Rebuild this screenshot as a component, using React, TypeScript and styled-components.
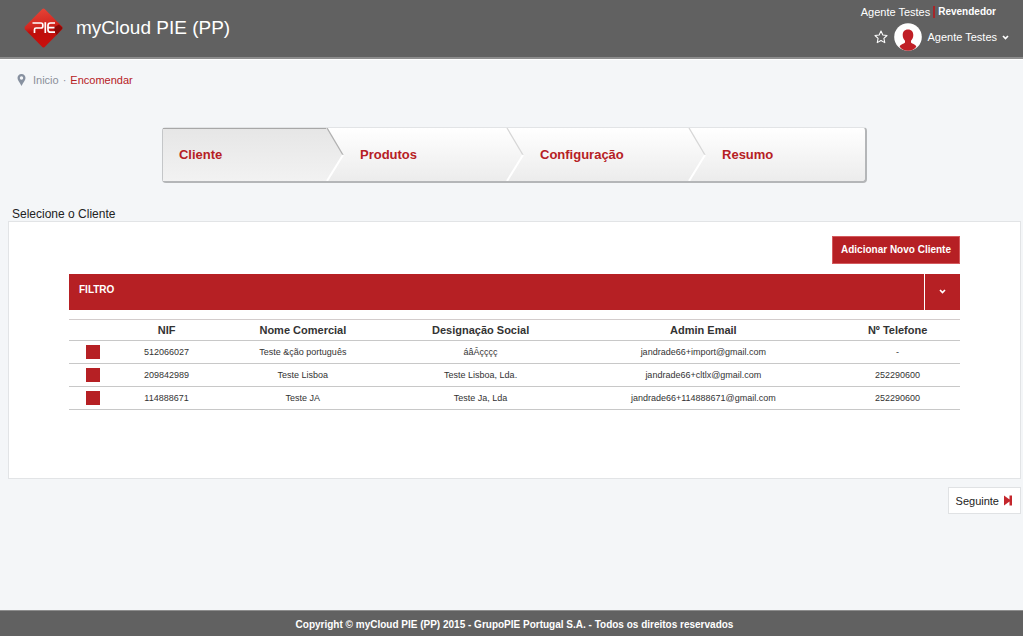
import React, { useState } from "react";
import styled, { createGlobalStyle } from "styled-components";

const red = "#b62024";

const GlobalStyle = createGlobalStyle`
  *, *::before, *::after { box-sizing: border-box; }
  body {
    margin: 0;
    background: #f4f6f8;
    color: #333;
    font: 11px/16px "Liberation Sans", Arial, sans-serif;
  }
  button { font: inherit; cursor: pointer; }
  a { color: inherit; text-decoration: none; }
`;

const Page = styled.div`
  display: flex;
  flex-direction: column;
  min-height: 100vh;
`;

const Header = styled.header`
  display: flex;
  align-items: flex-start;
  justify-content: space-between;
  height: 60px;
  padding: 4px 14px 0 24px;
  background: #616161;
  border-bottom: 1px solid #fff;
  box-shadow: inset 0 -2px 0 #8d8d8d;
  color: #fff;
`;

const Brand = styled.a`
  display: flex;
  align-items: center;
  gap: 13px;
  padding-top: 4px;
  font-size: 19px;
  line-height: 24px;
`;

const Account = styled.div`
  display: flex;
  flex-direction: column;
  align-items: flex-end;
`;

const Roles = styled.div`
  display: flex;
  align-items: center;
  gap: 3px;
  padding-right: 13px;
`;

const RoleName = styled.strong`
  font-size: 10px;
`;

const RoleDivider = styled.span`
  width: 2px;
  height: 12px;
  background: #a5262a;
`;

const UserBar = styled.div`
  display: flex;
  align-items: center;
  gap: 6px;
  padding-top: 3px;
`;

const PlainButton = styled.button`
  display: flex;
  align-items: center;
  gap: 5px;
  padding: 0;
  border: 0;
  background: none;
  color: inherit;
`;

const Breadcrumb = styled.nav`
  display: flex;
  align-items: center;
  gap: 4px;
  padding: 12px 17px;
  color: #8a8f98;
`;

const Crumb = styled.a<{ $current?: boolean }>`
  color: ${(p) => (p.$current ? red : "inherit")};
`;

const PinSlot = styled.span`
  display: flex;
  padding-right: 3px;
`;

const Wizard = styled.ol`
  display: flex;
  width: 69.6%;
  height: 56px;
  margin: 27px auto 0;
  padding: 0;
  list-style: none;
  border: 1px solid #c4c6c8;
  border-top-color: #e2e4e6;
  border-right: 2px solid #b4b6b8;
  border-bottom: 2px solid #b4b6b8;
  border-radius: 4px;
  background: linear-gradient(#fff, #ececec);
`;

const Step = styled.li<{ $share: number }>`
  display: flex;
  align-items: stretch;
  justify-content: space-between;
  flex: ${(p) => p.$share} 1 0;
`;

const StepFill = styled.button<{ $active?: boolean }>`
  flex: 1;
  padding: 0 0 0 16px;
  border: 0;
  background: ${(p) => (p.$active ? "linear-gradient(#e6e6e6, #f2f2f2)" : "none")};
  box-shadow: ${(p) => (p.$active ? "inset 0 1px 0 #a8a8a8" : "none")};
  color: ${red};
  font-size: 13px;
  font-weight: bold;
  text-align: left;
`;

const Chevron = styled.svg`
  display: block;
  flex: none;
`;

const Main = styled.main`
  flex: 1;
  padding: 0 2px 0 8px;
`;

const Title = styled.h1`
  margin: 24px 0 0;
  padding: 0 4px;
  color: #222;
  font-size: 12px;
  font-weight: normal;
  line-height: 14px;
`;

const Panel = styled.section`
  min-height: 258px;
  padding: 14px 60px 68px;
  border: 1px solid #e2e4e6;
  background: #fff;
`;

const PanelActions = styled.div`
  display: flex;
  justify-content: flex-end;
`;

const AddButton = styled.button`
  height: 28px;
  padding: 0 8px;
  border: 1px solid #d45a5d;
  background: ${red};
  color: #fff;
  font-size: 10px;
  font-weight: bold;
`;

const Filter = styled.div`
  display: flex;
  align-items: stretch;
  height: 36px;
  margin-top: 10px;
  background: ${red};
  color: #fff;
`;

const FilterLabel = styled.h2`
  flex: 1;
  margin: 0;
  padding: 8px 10px;
  font-size: 10px;
  font-weight: bold;
`;

const FilterToggle = styled.button`
  display: flex;
  align-items: center;
  justify-content: center;
  width: 36px;
  padding: 0 0 2px;
  border: 0;
  border-left: 1px solid #fff;
  background: none;
  color: inherit;
`;

const Table = styled.table`
  width: 100%;
  margin-top: 9px;
  border-collapse: collapse;
  table-layout: fixed;
  text-align: center;
`;

const HeadCell = styled.th<{ $width: string }>`
  width: ${(p) => p.$width};
  height: 21px;
  padding: 0;
  border-top: 1px solid #d3cccc;
  border-bottom: 1px solid #c8c8c8;
  font-size: 11px;
`;

const Cell = styled.td`
  height: 23px;
  padding: 0;
  border-bottom: 1px solid #c8c8c8;
  font-size: 9px;
`;

const Pick = styled.input`
  display: block;
  appearance: none;
  width: 14px;
  height: 14px;
  margin: 0 auto;
  background: ${red};
  cursor: pointer;
  &:checked { box-shadow: inset 0 0 0 2px #8c1518; }
`;

const Actions = styled.div`
  display: flex;
  justify-content: flex-end;
  padding: 8px 0;
`;

const NextButton = styled.button`
  display: flex;
  align-items: center;
  gap: 5px;
  height: 27px;
  padding: 0 8px 0 7px;
  border: 1px solid #e0e2e4;
  background: #fff;
  color: #222;
`;

const Footer = styled.footer`
  padding: 6px 0 3px 6px;
  border-top: 1px solid #8d8d8d;
  background: #616161;
  color: #fff;
  font-size: 10px;
  font-weight: bold;
  text-align: center;
`;

const Logo = () => (
  <svg width="39" height="40" viewBox="0 0 39 40" aria-hidden="true">
    <defs>
      <linearGradient id="gem" x1="0" y1="0" x2="0.15" y2="1">
        <stop offset="0" stopColor="#e8483a" />
        <stop offset="0.5" stopColor="#d2261f" />
        <stop offset="0.62" stopColor="#bd0f0c" />
        <stop offset="1" stopColor="#c80f0c" />
      </linearGradient>
    </defs>
    <path d="M18.300 1.100q1.200-1 2.400 0L38 18.600q1 1.400 0 2.800L20.700 38.900q-1.200 1-2.400 0L1 21.400q-1-1.400 0-2.800z" fill="url(#gem)" />
    <path d="M38.600 20 35 16.500l-6 3.500 3.500 7z" fill="#7d0907" opacity="0.8" />
    <g fill="none" stroke="#fff" strokeWidth="1.700">
      <path d="M8.500 15h8.500q1.800 0 1.800 1.800v1.400q0 1.800-1.800 1.800h-5q-1.500 0-1.500 1.500v3.500" />
      <path d="M21.300 14.200v10.800" />
      <path d="M31 15h-4.500q-2.500 0-2.500 2.500v4.200q0 2.500 2.500 2.500h4.500M24 19.600h6.500" />
    </g>
  </svg>
);

const Avatar = () => (
  <svg width="28" height="28" viewBox="0 0 28 28" aria-hidden="true">
    <circle cx="14" cy="14" r="13.800" fill="#fff" />
    <path d="M14 6.500c3.600 0 5.300 2.400 5.300 5.600 0 2.400-.9 4.400-2.300 5.600v1.800c1 1.600 5 1.600 5.300 4.300C20.500 26.500 17.500 27.800 14 27.800S7.500 26.500 5.700 23.800C6 21.100 10 21.100 11 19.500v-1.800c-1.400-1.200-2.300-3.200-2.300-5.600C8.700 8.900 10.400 6.500 14 6.500z" fill="#c01f26" />
  </svg>
);

const Star = () => (
  <svg width="14" height="14" viewBox="0 0 13 13" aria-hidden="true">
    <path d="M6.500 1 8.200 4.600l3.900.5-2.900 2.700.8 3.900-3.500-1.900L3 11.700l.8-3.900L.9 5.100l3.900-.5z" fill="none" stroke="#fff" strokeWidth="1" strokeLinejoin="round" />
  </svg>
);

const Caret = () => (
  <svg width="7" height="5" viewBox="0 0 7 5" aria-hidden="true">
    <path d="m1 1 2.500 2.500L6 1" fill="none" stroke="#fff" strokeWidth="1.700" />
  </svg>
);

const Pin = () => (
  <svg width="9" height="12" viewBox="0 0 9 12" aria-hidden="true">
    <path fillRule="evenodd" d="M4.500 0C7 0 8.500 1.800 8.500 4c0 2.300-2.300 4.500-4 8C2.800 8.500.5 6.300.5 4 .5 1.800 2 0 4.500 0zm0 2.300a1.700 1.700 0 1 0 0 3.400 1.700 1.700 0 0 0 0-3.400z" fill="#8791a0" />
  </svg>
);

const SkipNext = () => (
  <svg width="8" height="11" viewBox="0 0 8 11" aria-hidden="true">
    <path d="M0 .5l5.500 4V.5H8v10H5.500v-4l-5.500 4z" fill="#c4262c" />
  </svg>
);

const StepEdge = ({ active }: { active?: boolean }) => (
  <Chevron width="18" height="53" viewBox="0 0 18 53" aria-hidden="true">
    {active && (
      <>
        <defs>
          <linearGradient id="edge" x1="0" y1="0" x2="0" y2="1">
            <stop offset="0" stopColor="#e6e6e6" />
            <stop offset="1" stopColor="#f2f2f2" />
          </linearGradient>
        </defs>
        <path d="M0 0h1l16 27L1 53H0z" fill="url(#edge)" />
      </>
    )}
    <path d="M1 0l16 27" fill="none" stroke={active ? "#b0b0b0" : "#d6d6d6"} strokeWidth="1.300" />
    <path d="M17 27L1 53" fill="none" stroke="#fff" strokeWidth="2" />
  </Chevron>
);

const steps = [
  { label: "Cliente", share: 181 },
  { label: "Produtos", share: 180 },
  { label: "Configuração", share: 182 },
  { label: "Resumo", share: 159 },
];

const columns = [
  { label: "", width: "5.4%" },
  { label: "NIF", width: "11.1%" },
  { label: "Nome Comercial", width: "19.5%" },
  { label: "Designação Social", width: "20.4%" },
  { label: "Admin Email", width: "29.6%" },
  { label: "Nº Telefone", width: "14%" },
];

const clients = [
  ["512066027", "Teste &ção português", "áâÂçççç", "jandrade66+import@gmail.com", "-"],
  ["209842989", "Teste Lisboa", "Teste Lisboa, Lda.", "jandrade66+cltlx@gmail.com", "252290600"],
  ["114888671", "Teste JA", "Teste Ja, Lda", "jandrade66+114888671@gmail.com", "252290600"],
];

export default function App() {
  const [selected, setSelected] = useState("");
  return (
    <Page>
      <GlobalStyle />
      <Header>
        <Brand href="#">
          <Logo />
          myCloud PIE (PP)
        </Brand>
        <Account>
          <Roles>
            <span>Agente Testes</span>
            <RoleDivider />
            <RoleName>Revendedor</RoleName>
          </Roles>
          <UserBar>
            <PlainButton type="button" aria-label="Favoritos">
              <Star />
            </PlainButton>
            <PlainButton type="button">
              <Avatar />
              Agente Testes
              <Caret />
            </PlainButton>
          </UserBar>
        </Account>
      </Header>
      <Breadcrumb>
        <PinSlot>
          <Pin />
        </PinSlot>
        <Crumb href="#">Inicio</Crumb>
        <span>·</span>
        <Crumb href="#" $current>
          Encomendar
        </Crumb>
      </Breadcrumb>
      <Main>
        <Wizard>
          {steps.map((step, i) => (
            <Step key={step.label} $share={step.share}>
              <StepFill type="button" $active={i === 0}>
                {step.label}
              </StepFill>
              {i < steps.length - 1 && <StepEdge active={i === 0} />}
            </Step>
          ))}
        </Wizard>
        <Title>Selecione o Cliente</Title>
        <Panel>
          <PanelActions>
            <AddButton type="button">Adicionar Novo Cliente</AddButton>
          </PanelActions>
          <Filter>
            <FilterLabel>FILTRO</FilterLabel>
            <FilterToggle type="button" aria-label="Abrir filtro">
              <Caret />
            </FilterToggle>
          </Filter>
          <Table>
            <thead>
              <tr>
                {columns.map((c) => (
                  <HeadCell key={c.width} $width={c.width} scope="col">
                    {c.label}
                  </HeadCell>
                ))}
              </tr>
            </thead>
            <tbody>
              {clients.map((row) => (
                <tr key={row[0]}>
                  <Cell>
                    <Pick
                      type="radio"
                      name="client"
                      aria-label={row[1]}
                      checked={selected === row[0]}
                      onChange={() => setSelected(row[0])}
                    />
                  </Cell>
                  {row.map((value, i) => (
                    <Cell key={i}>{value}</Cell>
                  ))}
                </tr>
              ))}
            </tbody>
          </Table>
        </Panel>
        <Actions>
          <NextButton type="button">
            Seguinte
            <SkipNext />
          </NextButton>
        </Actions>
      </Main>
      <Footer>Copyright © myCloud PIE (PP) 2015 - GrupoPIE Portugal S.A. - Todos os direitos reservados</Footer>
    </Page>
  );
}
